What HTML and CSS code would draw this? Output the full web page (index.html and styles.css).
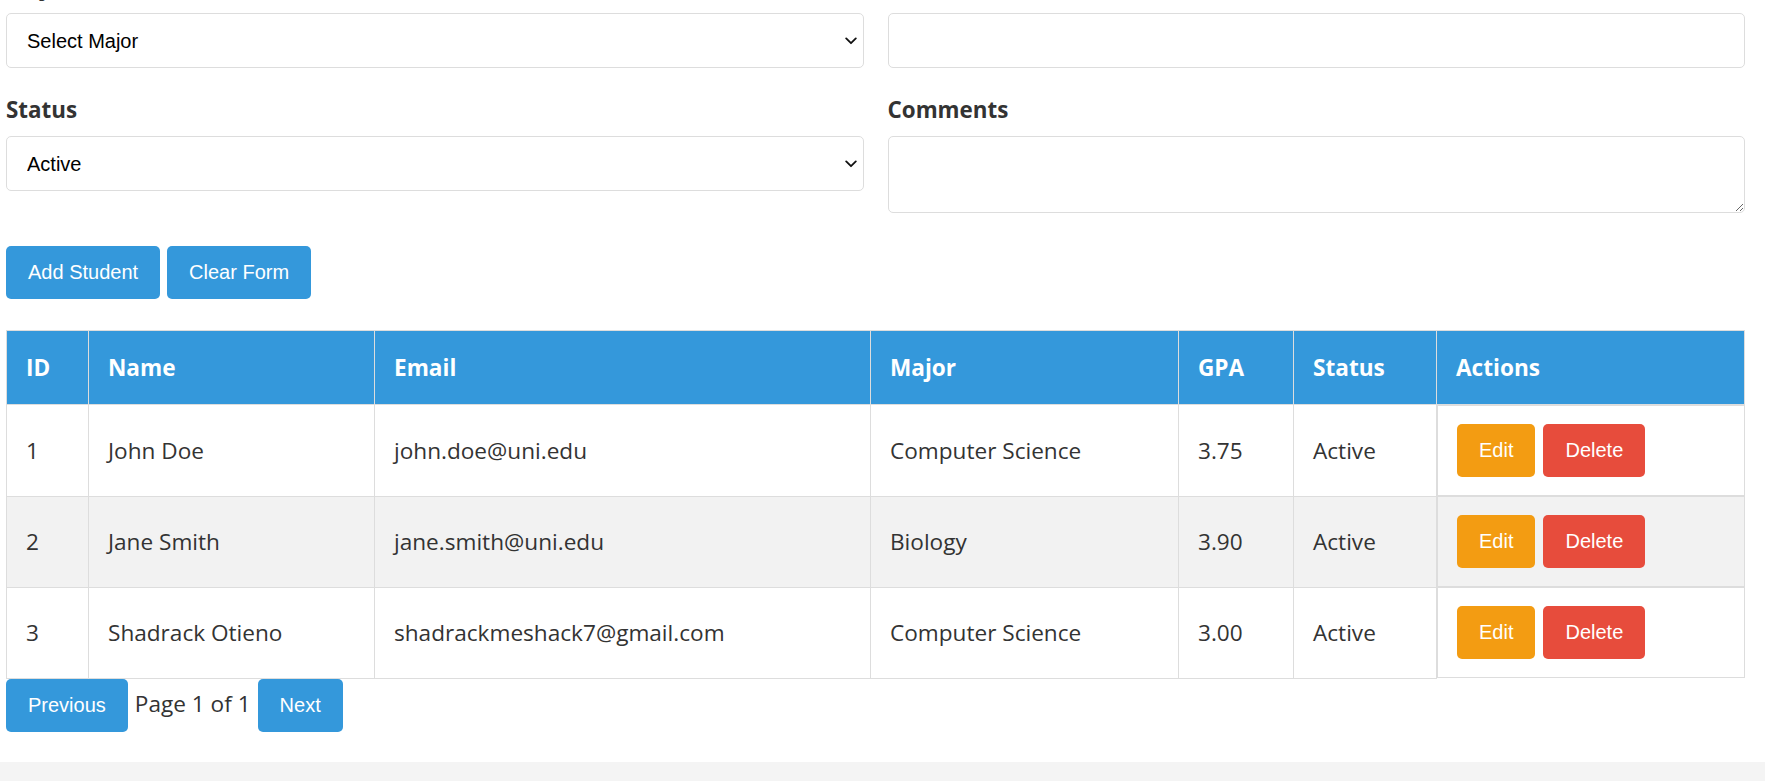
FILE: index.html
```html
<!DOCTYPE html>
<html lang="en">
<head>
<meta charset="utf-8">
<title>Student Management</title>
<link rel="stylesheet" href="styles.css">
</head>
<body>
<div class="card">
  <form class="student-form">
    <div class="form-grid">
      <div class="form-group">
        <label class="field-label" for="major">Major</label>
        <div class="select-wrap">
          <select id="major" class="field">
            <option>Select Major</option>
            <option>Computer Science</option>
            <option>Biology</option>
          </select>
          <svg class="chevron" width="12" height="8" viewBox="0 0 12 8" aria-hidden="true"><path d="M1.2 1.4 L6 6.2 L10.8 1.4" fill="none" stroke="#111" stroke-width="1.8" stroke-linecap="round" stroke-linejoin="round"/></svg>
        </div>
      </div>
      <div class="form-group">
        <label class="field-label" for="gpa">GPA</label>
        <input id="gpa" class="field" type="text">
      </div>
      <div class="form-group">
        <label class="field-label" for="status">Status</label>
        <div class="select-wrap">
          <select id="status" class="field">
            <option>Active</option>
            <option>Inactive</option>
          </select>
          <svg class="chevron" width="12" height="8" viewBox="0 0 12 8" aria-hidden="true"><path d="M1.2 1.4 L6 6.2 L10.8 1.4" fill="none" stroke="#111" stroke-width="1.8" stroke-linecap="round" stroke-linejoin="round"/></svg>
        </div>
      </div>
      <div class="form-group">
        <label class="field-label" for="comments">Comments</label>
        <textarea id="comments" class="field textarea"></textarea>
      </div>
    </div>
    <div class="form-actions">
      <button type="button" class="btn btn-primary">Add Student</button>
      <button type="button" class="btn btn-primary">Clear Form</button>
    </div>
  </form>

  <table class="students">
    <thead>
      <tr>
        <th class="c-id">ID</th>
        <th class="c-name">Name</th>
        <th class="c-email">Email</th>
        <th class="c-major">Major</th>
        <th class="c-gpa">GPA</th>
        <th class="c-status">Status</th>
        <th class="c-actions">Actions</th>
      </tr>
    </thead>
    <tbody>
      <tr>
        <td>1</td>
        <td>John Doe</td>
        <td>john.doe@uni.edu</td>
        <td>Computer Science</td>
        <td>3.75</td>
        <td>Active</td>
        <td class="actions"><button type="button" class="btn btn-edit">Edit</button><button type="button" class="btn btn-delete">Delete</button></td>
      </tr>
      <tr>
        <td>2</td>
        <td>Jane Smith</td>
        <td>jane.smith@uni.edu</td>
        <td>Biology</td>
        <td>3.90</td>
        <td>Active</td>
        <td class="actions"><button type="button" class="btn btn-edit">Edit</button><button type="button" class="btn btn-delete">Delete</button></td>
      </tr>
      <tr>
        <td>3</td>
        <td>Shadrack Otieno</td>
        <td>shadrackmeshack7@gmail.com</td>
        <td>Computer Science</td>
        <td>3.00</td>
        <td>Active</td>
        <td class="actions"><button type="button" class="btn btn-edit">Edit</button><button type="button" class="btn btn-delete">Delete</button></td>
      </tr>
    </tbody>
  </table>

  <div class="pagination">
    <button type="button" class="btn btn-primary">Previous</button>
    <span class="page-info">Page 1 of 1</span>
    <button type="button" class="btn btn-primary">Next</button>
  </div>
</div>
</body>
</html>
```

FILE: styles.css
```css
* {
  box-sizing: border-box;
}

html, body {
  margin: 0;
  padding: 0;
}

body {
  background: #f4f4f4;
  font-family: "Open Sans", "Noto Sans", sans-serif;
  font-size: 22.6px;
  color: #333;
  overflow: hidden;
}

.card {
  background: #fff;
  padding: 0 20px 30px 6px;
  box-shadow: 0 2px 9px rgba(0, 0, 0, 0.16);
}

.student-form {
  margin-top: -29px;
}

.form-grid {
  display: grid;
  grid-template-columns: 1fr 1fr;
  column-gap: 24px;
}

.form-group {
  margin-bottom: 26px;
}

.field-label {
  display: block;
  font-weight: 700;
  font-size: 22.4px;
  line-height: 31px;
  margin-bottom: 11px;
  color: #333;
}

.select-wrap {
  position: relative;
}

.field {
  display: block;
  width: 100%;
  height: 55px;
  margin: 0;
  padding: 0 20px;
  border: 1px solid #ddd;
  border-radius: 5px;
  background: #fff;
  font-family: "Liberation Sans", Arial, sans-serif;
  font-size: 20px;
  color: #000;
  outline: none;
}

select.field {
  appearance: none;
  -webkit-appearance: none;
}

.chevron {
  position: absolute;
  right: 7px;
  top: 24px;
  pointer-events: none;
}

.textarea {
  height: 77px;
  resize: vertical;
  padding: 12px 20px;
}

.form-actions {
  display: flex;
  gap: 7px;
  margin-top: 7px;
  margin-bottom: 31px;
}

.btn {
  font-family: "Liberation Sans", Arial, sans-serif;
  font-size: 20px;
  line-height: 23px;
  color: #fff;
  border: none;
  border-radius: 5px;
  padding: 15px 22px;
  cursor: pointer;
}

.btn-primary {
  background: #3498db;
}

.btn-edit {
  background: #f39c12;
}

.btn-delete {
  background: #e74c3c;
}

.students {
  width: 100%;
  border-collapse: collapse;
  table-layout: fixed;
}

.students th,
.students td {
  border: 1px solid #ddd;
  text-align: left;
  padding: 18px 19px;
}

.students th {
  background: #3498db;
  color: #fff;
  font-weight: 700;
  padding-top: 21px;
  padding-bottom: 21px;
}

.students tbody tr:nth-child(even),
.students tbody tr:nth-child(even) td {
  background: #f2f2f2;
}

.c-id { width: 82px; }
.c-name { width: 286px; }
.c-email { width: 496px; }
.c-major { width: 308px; }
.c-gpa { width: 115px; }
.c-status { width: 143px; }

.students td.actions {
  display: flex;
  gap: 8px;
}

.pagination {
  display: flex;
  align-items: baseline;
  gap: 7px;
}

.page-info {
  color: #333;
}
```
